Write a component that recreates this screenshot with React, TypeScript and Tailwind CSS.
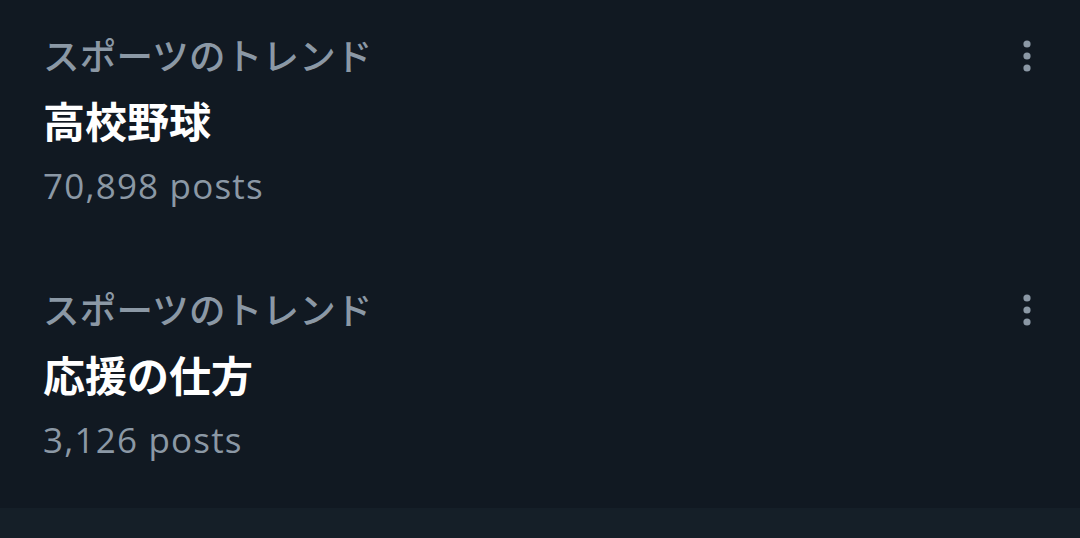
import React from "react";

interface Trend {
  category: string;
  title: string;
  posts: string;
}

const trends: Trend[] = [
  { category: "スポーツのトレンド", title: "高校野球", posts: "70,898 posts" },
  { category: "スポーツのトレンド", title: "応援の仕方", posts: "3,126 posts" },
];

const MoreIcon = () => (
  <svg width="8" height="34" viewBox="0 0 8 34" className="text-[#8b98a5]">
    <circle cx="4" cy="5" r="3.6" fill="currentColor" />
    <circle cx="4" cy="17" r="3.6" fill="currentColor" />
    <circle cx="4" cy="29" r="3.6" fill="currentColor" />
  </svg>
);

const TrendItem: React.FC<{ trend: Trend }> = ({ trend }) => (
  <div className="flex justify-between pl-[43px] pr-[49px]">
    <div className="flex flex-col">
      {/* カテゴリ */}
      <div className="h-[44px] leading-[44px] text-[36.5px] font-medium tracking-[0.2px] text-[#8b98a5] font-['Noto_Sans_CJK_JP',sans-serif]">
        {trend.category}
      </div>
      {/* タイトル */}
      <div className="h-[86px] leading-[86px] text-[42px] font-bold text-white font-['Noto_Sans_CJK_JP',sans-serif]">
        {trend.title}
      </div>
      {/* 投稿数 */}
      <div className="h-[46px] leading-[46px] text-[35px] tracking-[1.2px] text-[#8b98a5] font-['Open_Sans','Noto_Sans_CJK_JP',sans-serif]">
        {trend.posts}
      </div>
    </div>
    <div className="pt-[6px]">
      <MoreIcon />
    </div>
  </div>
);

export default function App() {
  return (
    <div className="w-[1080px] h-[538px] bg-[#111922] flex flex-col overflow-hidden">
      <div className="flex flex-col gap-[78px] pt-[33px] pb-[45px]">
        {trends.map((t, i) => (
          <TrendItem key={i} trend={t} />
        ))}
      </div>
      <div className="flex-1 bg-[#151f28]" />
    </div>
  );
}
